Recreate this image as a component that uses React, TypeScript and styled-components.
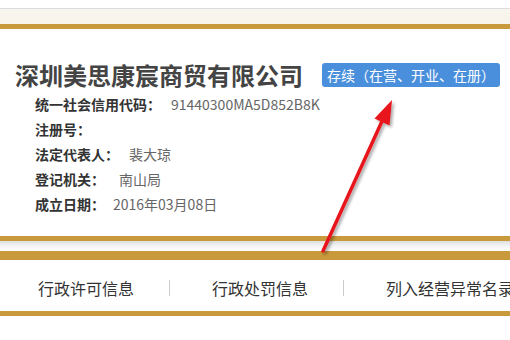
import React from 'react';
import styled, { createGlobalStyle } from 'styled-components';

const colors = {
    gold: '#c99a3c',
    cream: '#f9f6ef',
    title: '#444444',
    label: '#333333',
    value: '#666666',
    badge: '#4a8fdc',
    white: '#ffffff',
};

const GlobalStyle = createGlobalStyle`
    body {
        margin: 0;
        background: ${colors.white};
        font-family: "Noto Sans CJK SC", "Noto Sans", sans-serif;
    }
`;

interface InfoItem {
    label: string;
    value: string;
    gap: number;
}

const infoItems: InfoItem[] = [
    { label: '统一社会信用代码：', value: '91440300MA5D852B8K', gap: 10 },
    { label: '注册号：', value: '', gap: 10 },
    { label: '法定代表人：', value: '裴大琼', gap: 10 },
    { label: '登记机关：', value: '南山局', gap: 14 },
    { label: '成立日期：', value: '2016年03月08日', gap: 8 },
];

const tabs = ['行政许可信息', '行政处罚信息', '列入经营异常名录'];

const RedArrow = () => (
    <ArrowLayer viewBox="0 0 510 340" width={510} height={340}>
        <defs>
            <filter id="arrowShadow" x="-20%" y="-20%" width="140%" height="140%">
                <feDropShadow dx="2" dy="2" stdDeviation="1.5" floodColor="#000" floodOpacity="0.35" />
            </filter>
        </defs>
        <g filter="url(#arrowShadow)">
            <line x1="323" y1="251" x2="383" y2="119" stroke="#e8141b" strokeWidth="3.5" strokeLinecap="round" />
            <polygon points="392,100 374.5,118.5 389.5,125.5" fill="#e8141b" />
        </g>
    </ArrowLayer>
);

const App = () => {
    return (
        <>
            <GlobalStyle />
            <Page>
                <TopBar>
                    <TopStrip />
                </TopBar>
                <Card>
                    <TitleRow>
                        <CompanyName>深圳美思康宸商贸有限公司</CompanyName>
                        <StatusBadge>存续（在营、开业、在册）</StatusBadge>
                    </TitleRow>
                    <InfoList>
                        {infoItems.map((item) => (
                            <InfoRow key={item.label}>
                                <Label>{item.label}</Label>
                                <Value $gap={item.gap}>{item.value}</Value>
                            </InfoRow>
                        ))}
                    </InfoList>
                </Card>
                <ShadowGap />
                <TabBar>
                    {tabs.map((tab) => (
                        <Tab key={tab}>{tab}</Tab>
                    ))}
                </TabBar>
                <RedArrow />
            </Page>
        </>
    );
};

const Page = styled.div`
    position: relative;
    width: 510px;
    height: 340px;
    overflow: hidden;
    background: ${colors.white};
`;

const TopBar = styled.div`
    padding-top: 8px;
`;

const TopStrip = styled.div`
    height: 15px;
    border-top: 1px solid #dcdcdc;
    border-bottom: 5px solid ${colors.gold};
    background: linear-gradient(${colors.cream}, #f8f3ea);
`;

const Card = styled.div`
    padding: 32px 0 20px 15px;
    border-bottom: 5px solid ${colors.gold};
`;

const TitleRow = styled.div`
    display: flex;
    align-items: center;
    gap: 19px;
    white-space: nowrap;
`;

const CompanyName = styled.div`
    font-size: 24px;
    line-height: 28px;
    font-weight: 700;
    color: ${colors.title};
`;

const StatusBadge = styled.div`
    height: 24px;
    line-height: 24px;
    padding: 0 5px;
    font-size: 14px;
    color: ${colors.white};
    background: ${colors.badge};
    border-radius: 3px;
`;

const InfoList = styled.div`
    margin-top: 2px;
    padding-left: 20px;
    display: flex;
    flex-direction: column;
`;

const InfoRow = styled.div`
    display: flex;
    align-items: center;
    height: 25px;
    font-size: 14px;
    white-space: nowrap;
`;

const Label = styled.span`
    font-weight: 700;
    color: ${colors.label};
`;

const Value = styled.span<{ $gap: number }>`
    margin-left: ${({ $gap }) => $gap}px;
    color: ${colors.value};
`;

const ShadowGap = styled.div`
    height: 10px;
    background: linear-gradient(#dedede, #f4f4f4 50%, ${colors.white});
`;

const TabBar = styled.div`
    display: flex;
    align-items: center;
    padding: 20px 0 15px 3px;
    border-top: 9px solid ${colors.gold};
    border-bottom: 5px solid ${colors.gold};
    white-space: nowrap;
`;

const Tab = styled.div`
    height: 16px;
    line-height: 16px;
    padding: 0 35px 0 42px;
    font-size: 16px;
    color: ${colors.label};
    border-left: 1px solid #cccccc;

    &:first-child {
        padding-left: 35px;
        border-left: none;
    }
`;

const ArrowLayer = styled.svg`
    position: absolute;
    top: 0;
    left: 0;
    pointer-events: none;
`;

export default App;
